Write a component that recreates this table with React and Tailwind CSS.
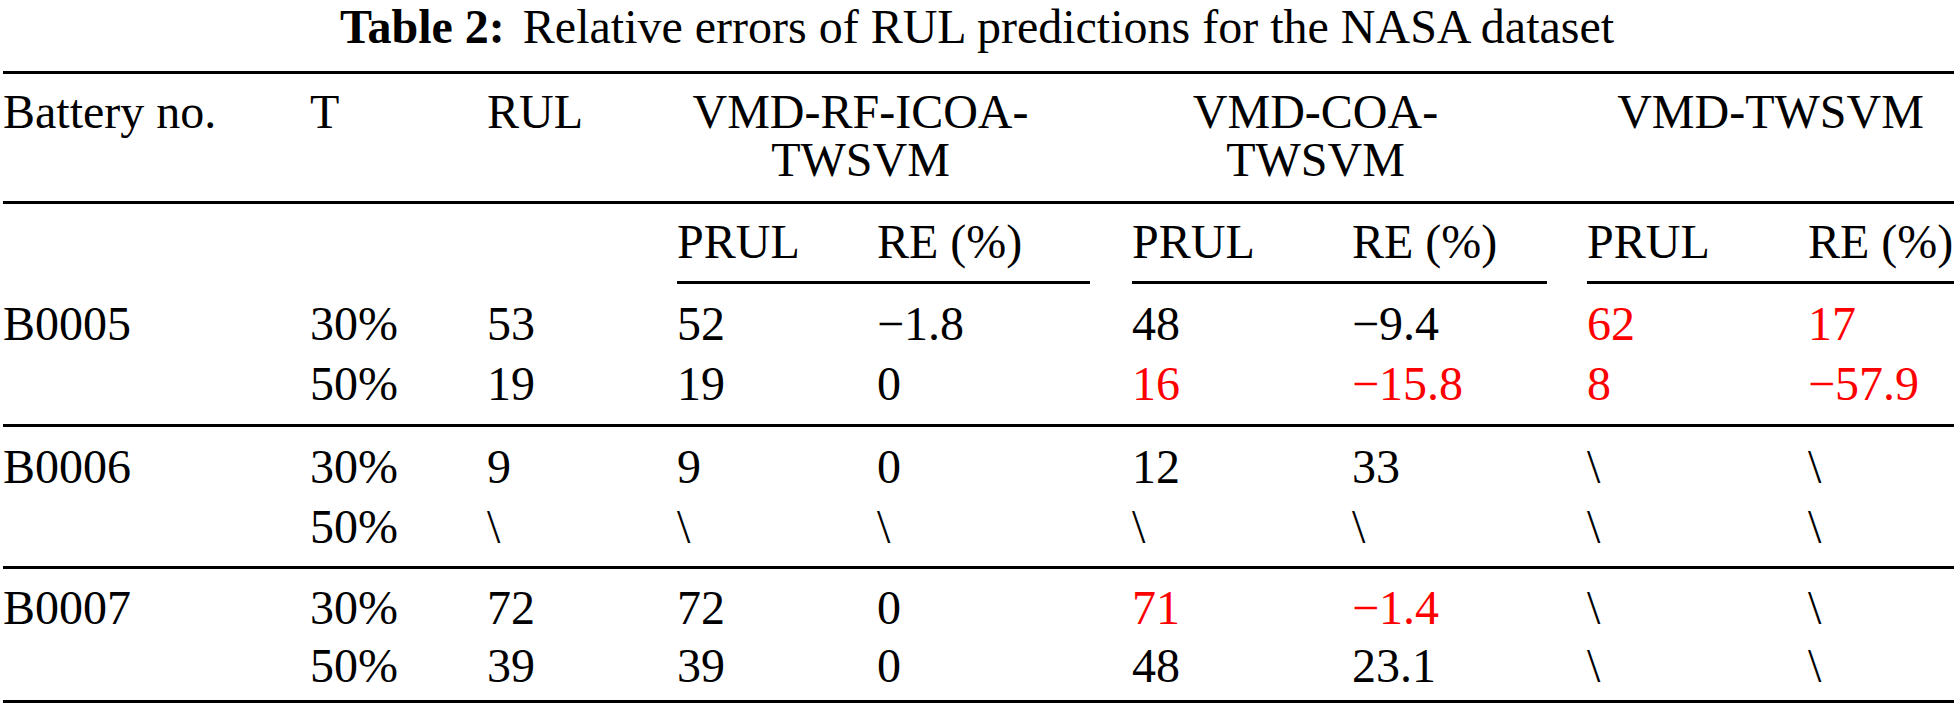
import React from 'react';

const R = 'text-[#ff0000]';

const groups = [
    {
        id: 'B0005',
        rows: [
            ['30%', '53', '52', '−1.8', ['48'], ['−9.4'], ['62', R], ['17', R]],
            ['50%', '19', '19', '0', ['16', R], ['−15.8', R], ['8', R], ['−57.9', R]],
        ],
        pb: 'pb-[10px]',
        lh: 'h-[60px] leading-[60px]',
    },
    {
        id: 'B0006',
        rows: [
            ['30%', '9', '9', '0', ['12'], ['33'], ['\\'], ['\\']],
            ['50%', '\\', '\\', '\\', ['\\'], ['\\'], ['\\'], ['\\']],
        ],
        pb: 'pb-[9px]',
        lh: 'h-[60px] leading-[60px]',
    },
    {
        id: 'B0007',
        rows: [
            ['30%', '72', '72', '0', ['71', R], ['−1.4', R], ['\\'], ['\\']],
            ['50%', '39', '39', '0', ['48'], ['23.1'], ['\\'], ['\\']],
        ],
        pb: 'pb-[5px]',
        lh: 'h-[58px] leading-[58px]',
    },
];

const cols = 'grid grid-cols-[307px_177px_190px_200px_255px_220px_235px_221px_1fr]';

const Rule = () => <div className="h-[3px] bg-black" />;

export default function App() {
    return (
        <div className="w-[1954px] h-[708px] bg-white text-black overflow-hidden font-['Liberation_Serif','Times_New_Roman',serif]">
            {/* caption */}
            <div className="text-center text-[48px] leading-[54px] pb-[17px] whitespace-nowrap">
                <span className="font-bold">Table 2:</span>
                <span className="ml-[18px]">Relative errors of RUL predictions for the NASA dataset</span>
            </div>

            <div className="pl-[3px]">
                <Rule />

                {/* header */}
                <div className={`${cols} text-[48px] leading-[48px] pt-[14px] pb-[17px]`}>
                    <div className="whitespace-nowrap">Battery no.</div>
                    <div>T</div>
                    <div>RUL</div>
                    <div className="col-span-2">
                        <div className="w-[367px] text-center whitespace-nowrap">VMD-RF-ICOA-<br />TWSVM</div>
                    </div>
                    <div className="col-span-2">
                        <div className="w-[367px] text-center whitespace-nowrap">VMD-COA-<br />TWSVM</div>
                    </div>
                    <div className="col-span-2">
                        <div className="w-[367px] text-center whitespace-nowrap">VMD-TWSVM</div>
                    </div>
                </div>
                <Rule />

                {/* sub header */}
                <div className={`${cols} text-[48px] leading-[60px] pt-[8px] pb-[9px]`}>
                    <div className="col-span-3" />
                    <div>PRUL</div>
                    <div className="whitespace-nowrap">RE (%)</div>
                    <div>PRUL</div>
                    <div className="whitespace-nowrap">RE (%)</div>
                    <div>PRUL</div>
                    <div className="whitespace-nowrap">RE (%)</div>
                </div>
                <div className={cols}>
                    <div className="col-span-3" />
                    <div className="col-span-2">
                        <div className="w-[413px] h-[3px] bg-black" />
                    </div>
                    <div className="col-span-2">
                        <div className="w-[415px] h-[3px] bg-black" />
                    </div>
                    <div className="col-span-2 h-[3px] bg-black" />
                </div>

                {/* body */}
                {groups.map((g, gi) => (
                    <div key={g.id}>
                        {gi > 0 && <Rule />}
                        <div className={`pt-[10px] ${g.pb} text-[48px]`}>
                            {g.rows.map((r, ri) => (
                                <div key={ri} className={`${cols} ${g.lh}`}>
                                    <div>{ri === 0 ? g.id : ''}</div>
                                    <div>{r[0]}</div>
                                    <div>{r[1]}</div>
                                    <div>{r[2]}</div>
                                    <div>{r[3]}</div>
                                    {r.slice(4).map((c, ci) => (
                                        <div key={ci} className={`whitespace-nowrap ${c[1] || ''}`}>{c[0]}</div>
                                    ))}
                                </div>
                            ))}
                        </div>
                    </div>
                ))}
                <Rule />
            </div>
        </div>
    );
}
